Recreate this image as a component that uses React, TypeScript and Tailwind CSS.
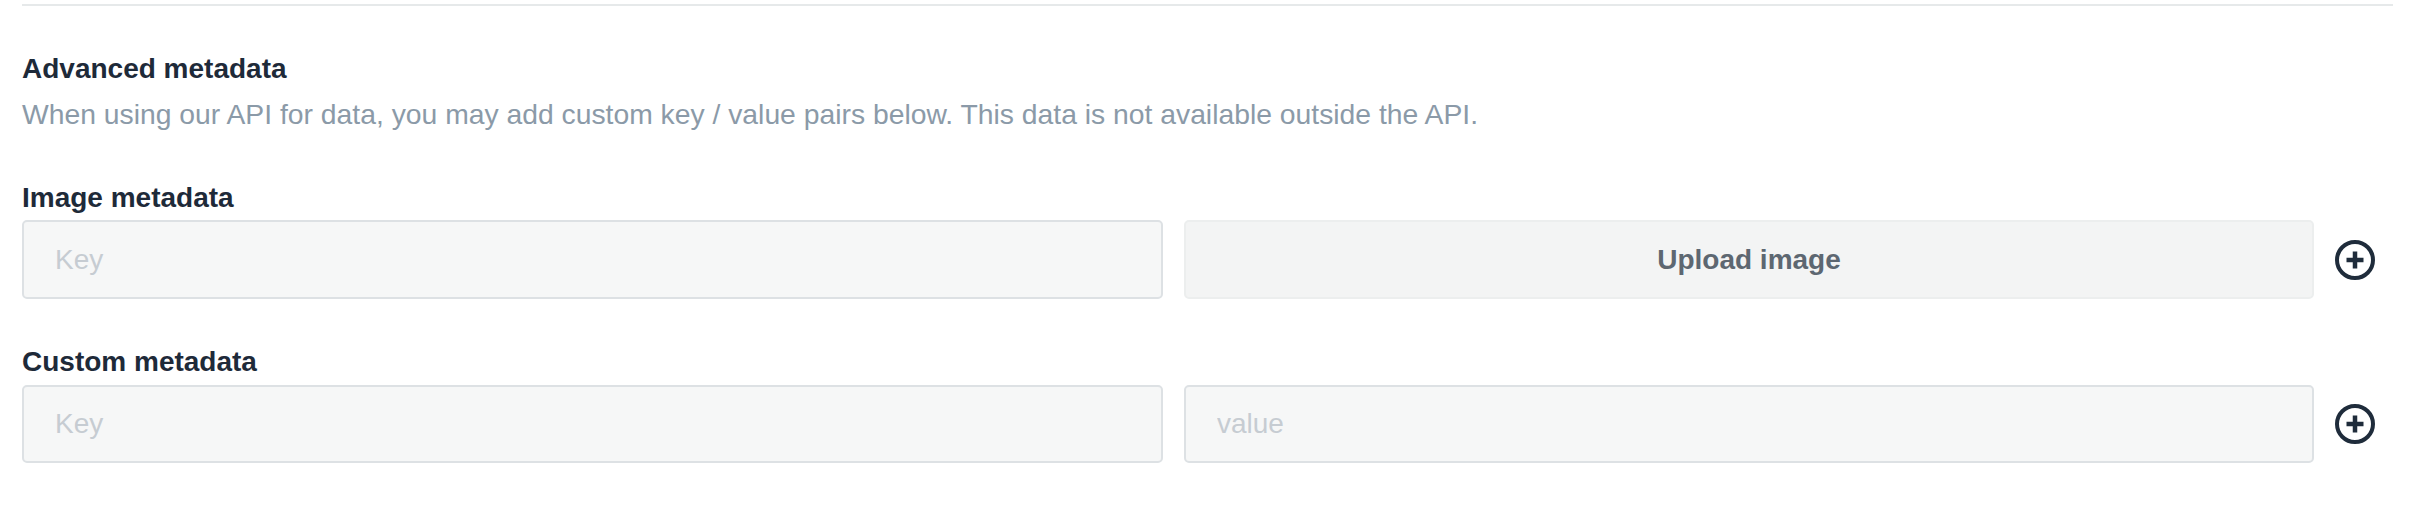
function PlusCircle() {
  return (
    <button type="button" className="w-[40px] h-[40px] shrink-0 text-[#1f2c3b]">
      <svg viewBox="0 0 40 40" width="40" height="40" fill="none" stroke="currentColor">
        <circle cx="20" cy="20" r="18" strokeWidth="4" />
        <path d="M20 11.5v17M11.5 20h17" strokeWidth="4.5" />
      </svg>
    </button>
  );
}

function KeyInput({ placeholder, height }: { placeholder: string; height: string }) {
  return (
    <input
      type="text"
      placeholder={placeholder}
      className={`${height} w-[1141px] shrink-0 rounded-[5px] border-2 border-[#dde1e4] bg-[#f6f7f7] pl-[31px] text-[28px] text-[#1f2c3b] placeholder:text-[#c6ccd2] outline-none`}
    />
  );
}

export default function App() {
  return (
    <div className="min-h-[508px] bg-white pl-[22px] pr-[31px] pt-[4px] font-['Liberation_Sans',Arial,sans-serif]">
      <div className="border-t-2 border-[#e6e9ea] pt-[47px]">
        <h2 className="text-[28px] leading-[32px] font-bold text-[#1e2a39]">Advanced metadata</h2>
        <p className="mt-[13px] text-[28.3px] leading-[32px] text-[#8b9aa8]">
          When using our API for data, you may add custom key / value pairs below. This data is not available outside the API.
        </p>

        <div className="mt-[52px]">
          <h3 className="text-[28px] leading-[32px] font-bold text-[#1e2a39]">Image metadata</h3>
          <div className="mt-[6px] flex items-center gap-[21px]">
            <KeyInput placeholder="Key" height="h-[79px]" />
            <button
              type="button"
              className="h-[79px] w-[1130px] shrink-0 rounded-[5px] border-2 border-[#eceeee] bg-[#f3f4f4] text-[28px] font-bold text-[#5d6771]"
            >
              Upload image
            </button>
            <PlusCircle />
          </div>
        </div>

        <div className="mt-[47px]">
          <h3 className="text-[28px] leading-[32px] font-bold text-[#1e2a39]">Custom metadata</h3>
          <div className="mt-[7px] flex items-center gap-[21px]">
            <KeyInput placeholder="Key" height="h-[78px]" />
            <input
              type="text"
              placeholder="value"
              className="h-[78px] w-[1130px] shrink-0 rounded-[5px] border-2 border-[#dde1e4] bg-[#f6f7f7] pl-[31px] text-[28px] text-[#1f2c3b] placeholder:text-[#c6ccd2] outline-none"
            />
            <PlusCircle />
          </div>
        </div>
      </div>
    </div>
  );
}
